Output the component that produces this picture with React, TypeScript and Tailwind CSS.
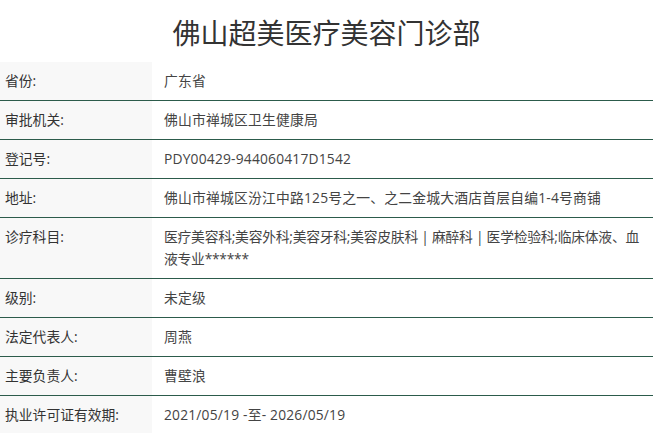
import React from 'react';

const rows: [string, React.ReactNode][] = [
  ['省份:', '广东省'],
  ['审批机关:', '佛山市禅城区卫生健康局'],
  ['登记号:', 'PDY00429-944060417D1542'],
  ['地址:', '佛山市禅城区汾江中路125号之一、之二金城大酒店首层自编1-4号商铺'],
  [
    '诊疗科目:',
    <span className="tracking-[-0.25px]">
      医疗美容科;美容外科;美容牙科;美容皮肤科 | 麻醉科 | 医学检验科;临床体液、血
      <br />
      液专业******
    </span>,
  ],
  ['级别:', '未定级'],
  ['法定代表人:', '周燕'],
  ['主要负责人:', '曹壁浪'],
  ['执业许可证有效期:', '2021/05/19 -至- 2026/05/19'],
];

export default function App() {
  return (
    <div className="w-[653px] h-[433px] overflow-hidden bg-white text-[#333] font-['Open_Sans','Noto_Sans_CJK_SC',sans-serif]">
      <h1 className="text-center text-[28px] leading-[40px] pt-[13px] pb-[9px] text-[#333]">
        佛山超美医疗美容门诊部
      </h1>
      <div className="flex flex-col">
        {rows.map(([label, value]) => (
          <div key={label} className="flex border-b border-[#2c5b4b] text-[13.8px] leading-[22px]">
            <div className="w-[152px] shrink-0 bg-[#f8f8f8] px-[5px] py-[8px]">{label}</div>
            <div className="flex-1 pl-[12px] pr-0 py-[8px] text-[#444] whitespace-nowrap tracking-[0.2px]">
              {value}
            </div>
          </div>
        ))}
      </div>
    </div>
  );
}
